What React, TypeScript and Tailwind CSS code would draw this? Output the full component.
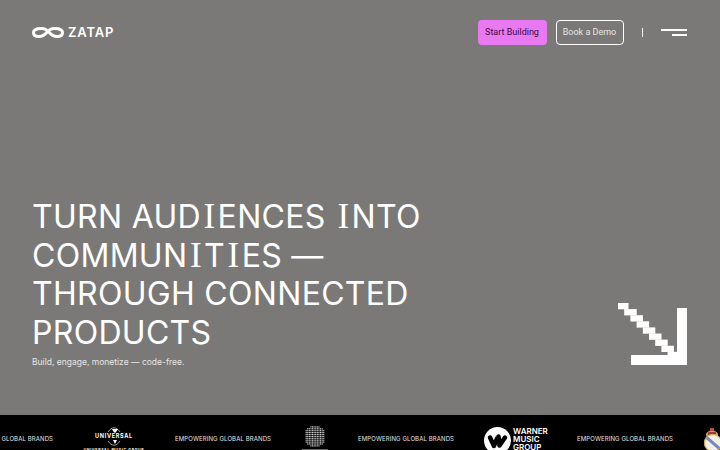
import React from "react";

const font = { fontFamily: "Inter, sans-serif" };
const roboto = { fontFamily: "Roboto, sans-serif" };

function Logo() {
  return (
    <svg width="32" height="11" viewBox="0 0 32 11" fill="none" className="shrink-0">
      <path d="M1.500 5.500C1.500 2.800 5 1.500 9.500 1.500 13.500 1.500 16 3.800 17.500 5.800 19.500 8.300 22.500 9.500 25 9.500 28.500 9.500 30.500 7.800 30.500 5.500 30.500 2.800 27 1.500 22.500 1.500 18.500 1.500 16 3.800 14.500 5.800 12.500 8.300 9.500 9.500 7 9.500 3.500 9.500 1.500 7.800 1.500 5.500Z" stroke="#fff" strokeWidth="3" />
    </svg>
  );
}

function Arrow() {
  const steps = Array.from({ length: 9 });
  return (
    <svg width="69" height="64" viewBox="0 0 69 64" fill="#fff">
      {steps.map((_, k) => (
        <rect key={k} x={k * 6.2} y={1 + k * 6.1} width={k === 0 ? 10.500 : 12.500} height="6.300" />
      ))}
      <rect x="59" y="6" width="10" height="57" />
      <rect x="13" y="53" width="56" height="10" />
    </svg>
  );
}

function SerifI() {
  return <span className="px-[2.500px] text-[35px] font-normal tracking-normal [font-family:'Liberation_Serif',serif]">I</span>;
}

function Brand() {
  return (
    <div className="mt-[21px] w-[96px] shrink-0 whitespace-nowrap text-[6px] leading-[6px] tracking-[0.12px] text-[#e5e5e5]" style={font}>
      EMPOWERING GLOBAL BRANDS
    </div>
  );
}

function Universal() {
  return (
    <div className="flex w-[62px] shrink-0 flex-col items-center pt-[12px] text-white" style={font}>
      <div className="relative flex h-[19px] w-[36px] items-center justify-center">
        <svg width="16" height="19" viewBox="0 0 16 19" className="absolute" fill="none">
          <path d="M2 5C4 2 6 .8 8 .8S12 2 14 5M2 14c2 3 4 4.200 6 4.200s4-1.200 6-4.200" stroke="#fff" strokeWidth=".6" />
          <path d="M6 2h6l-2 3-1 1-2-2ZM7 13h4l-2 4-1-2Z" fill="#fff" />
        </svg>
        <span className="relative text-[5.500px] font-bold leading-none tracking-[0.7px]">UNIVERSAL</span>
      </div>
      <span className="mt-[3px] whitespace-nowrap text-[3.500px] font-bold leading-none tracking-[0.7px]">UNIVERSAL MUSIC GROUP</span>
    </div>
  );
}

function Dots() {
  const rows = [6, 10, 12, 12, 12, 12, 12, 12, 12, 10, 6];
  return (
    <div className="flex w-[27px] shrink-0 flex-col items-center pt-[11px]">
      <svg width="20" height="21" viewBox="0 0 20 21" fill="#d4d4d4">
        {rows.map((n, r) =>
          Array.from({ length: n }).map((_, c) => (
            <rect key={`${r}-${c}`} x={10 - n * 0.8 + c * 1.600 + 0.2} y={r * 1.900 + 0.300} width="1.100" height="1.200" />
          ))
        )}
      </svg>
      <div className="mt-[2px] h-[1px] w-[26px] bg-[#666]" />
    </div>
  );
}

function Warner() {
  return (
    <div className="flex w-[63px] shrink-0 items-start gap-[2px] pt-[12px] text-white" style={font}>
      <svg width="27" height="27" viewBox="0 0 27 27" className="shrink-0">
        <circle cx="13.500" cy="13.500" r="13.500" fill="#fff" />
        <path d="M6 10.500 10 19 13 11.500M14.500 9.500 15.500 18.500 21 10.500" fill="none" stroke="#000" strokeWidth="4.500" strokeLinecap="round" strokeLinejoin="round" />
      </svg>
      <div className="text-[8px] font-semibold leading-[8px]">
        WARNER
        <br />
        MUSIC
        <br />
        GROUP
      </div>
    </div>
  );
}

function Crest() {
  return (
    <svg width="20" height="24" viewBox="0 0 20 24" className="mt-[13px] shrink-0">
      <path d="M3 7C3 1 15 1 15 7l-1 2H4Z" fill="#c9a24a" />
      <rect x="7" y="0" width="4" height="3" fill="#b5523a" />
      <rect x="5" y="4" width="8" height="3" fill="#a23a32" />
      <circle cx="10" cy="15" r="9" fill="#f1efe6" />
      <path d="M3 9l14 12" stroke="#7a88b8" strokeWidth="3" />
      <circle cx="10" cy="15" r="8.500" fill="none" stroke="#c9a24a" strokeWidth="1" />
    </svg>
  );
}

export default function App() {
  return (
    <div className="flex h-[450px] w-[720px] flex-col overflow-hidden bg-[#7a7977]" style={font}>
      <header className="flex h-[65px] shrink-0 items-center justify-between pl-[32px] pr-[33px]">
        <div className="flex items-center gap-[4px]">
          <Logo />
          <span className="text-[13px] font-semibold leading-none tracking-[0.8px] text-white">ZATAP</span>
        </div>
        <div className="flex items-center" style={roboto}>
          <button className="flex h-[25px] w-[69px] items-center justify-center rounded-[4px] bg-[#e879f0] text-[9px] font-normal text-[#3b0a45]">
            Start Building
          </button>
          <button className="ml-[9px] flex h-[25px] w-[68px] items-center justify-center rounded-[4px] border border-white text-[9px] text-[#e5e5e5]">
            Book a Demo
          </button>
          <div className="ml-[18px] h-[9px] w-[1.500px] bg-white" />
          <div className="ml-[18px] flex w-[26px] flex-col items-end gap-[3.500px]">
            <div className="h-[1.500px] w-[26px] bg-white" />
            <div className="h-[1.500px] w-[15px] bg-white" />
          </div>
        </div>
      </header>
      <main className="flex min-h-0 flex-1 items-end justify-between pb-[46px] pl-[32px] pr-[33px]">
        <div>
          <h1 className="w-[420px] text-[32px] font-normal leading-[38.400px] tracking-[0.3px] text-white">
            TURN AUD<SerifI />ENCES <SerifI />NTO COMMUN<SerifI />T<SerifI />ES — THROUGH CONNECTED PRODUCTS
          </h1>
          <p className="mt-[3px] text-[8.500px] leading-[14px] text-[#e5e5e5]">Build, engage, monetize — code-free.</p>
        </div>
        <div className="mb-[3px]">
          <Arrow />
        </div>
      </main>
      <footer className="flex h-[35px] shrink-0 overflow-hidden bg-black">
        <div className="ml-[-43px] flex items-start gap-[30px]">
          <Brand />
          <Universal />
          <Brand />
          <Dots />
          <Brand />
          <Warner />
          <Brand />
          <Crest />
        </div>
      </footer>
    </div>
  );
}
